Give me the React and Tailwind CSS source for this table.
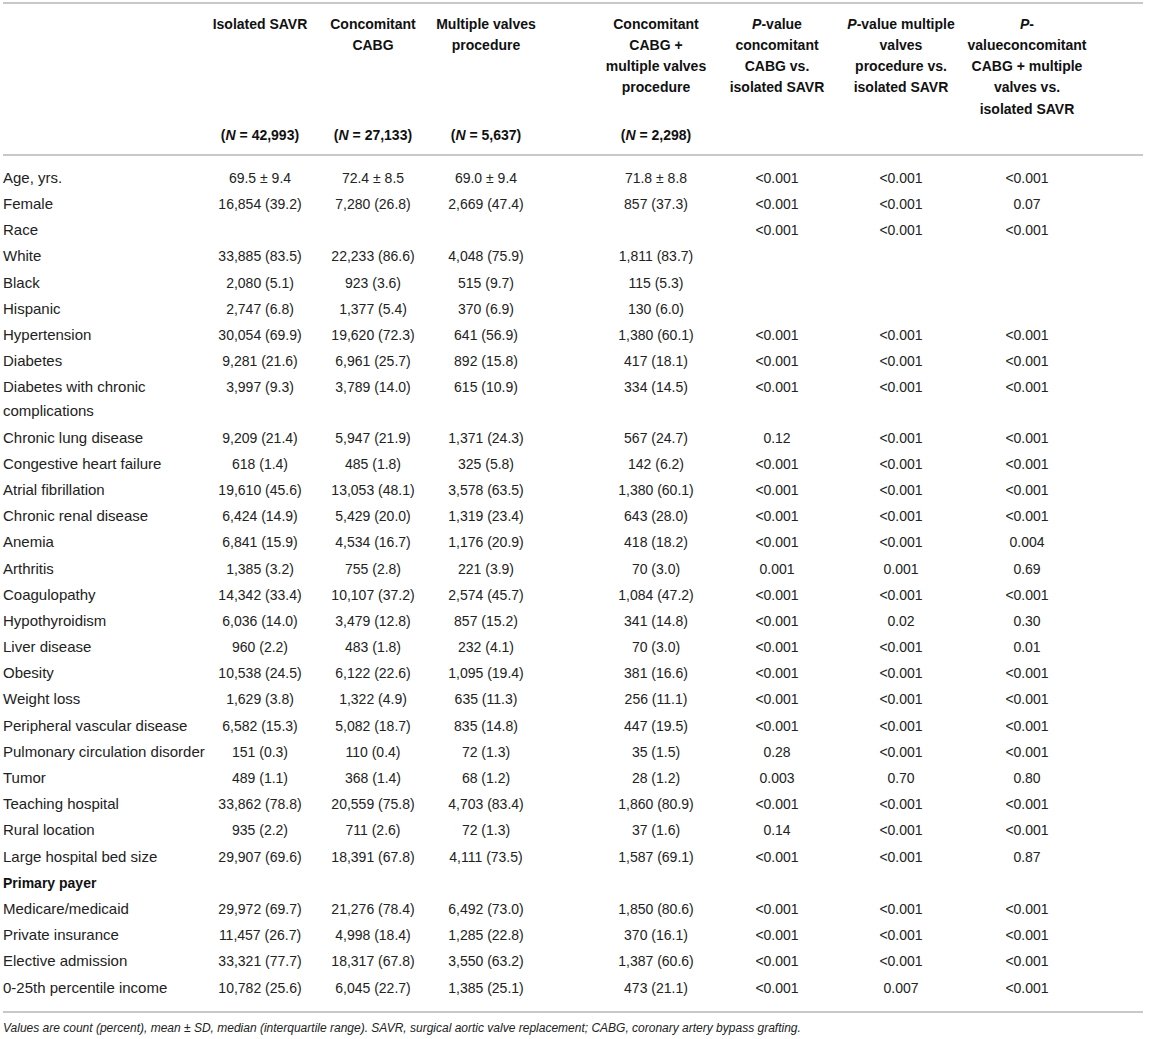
import React from 'react';

const LT = '<0.001';

const rows = [
  ['Age, yrs.', '69.5 ± 9.4', '72.4 ± 8.5', '69.0 ± 9.4', '71.8 ± 8.8', LT, LT, LT],
  ['Female', '16,854 (39.2)', '7,280 (26.8)', '2,669 (47.4)', '857 (37.3)', LT, LT, '0.07'],
  ['Race', '', '', '', '', LT, LT, LT],
  ['White', '33,885 (83.5)', '22,233 (86.6)', '4,048 (75.9)', '1,811 (83.7)', '', '', ''],
  ['Black', '2,080 (5.1)', '923 (3.6)', '515 (9.7)', '115 (5.3)', '', '', ''],
  ['Hispanic', '2,747 (6.8)', '1,377 (5.4)', '370 (6.9)', '130 (6.0)', '', '', ''],
  ['Hypertension', '30,054 (69.9)', '19,620 (72.3)', '641 (56.9)', '1,380 (60.1)', LT, LT, LT],
  ['Diabetes', '9,281 (21.6)', '6,961 (25.7)', '892 (15.8)', '417 (18.1)', LT, LT, LT],
  [['Diabetes with chronic', 'complications'], '3,997 (9.3)', '3,789 (14.0)', '615 (10.9)', '334 (14.5)', LT, LT, LT],
  ['Chronic lung disease', '9,209 (21.4)', '5,947 (21.9)', '1,371 (24.3)', '567 (24.7)', '0.12', LT, LT],
  ['Congestive heart failure', '618 (1.4)', '485 (1.8)', '325 (5.8)', '142 (6.2)', LT, LT, LT],
  ['Atrial fibrillation', '19,610 (45.6)', '13,053 (48.1)', '3,578 (63.5)', '1,380 (60.1)', LT, LT, LT],
  ['Chronic renal disease', '6,424 (14.9)', '5,429 (20.0)', '1,319 (23.4)', '643 (28.0)', LT, LT, LT],
  ['Anemia', '6,841 (15.9)', '4,534 (16.7)', '1,176 (20.9)', '418 (18.2)', LT, LT, '0.004'],
  ['Arthritis', '1,385 (3.2)', '755 (2.8)', '221 (3.9)', '70 (3.0)', '0.001', '0.001', '0.69'],
  ['Coagulopathy', '14,342 (33.4)', '10,107 (37.2)', '2,574 (45.7)', '1,084 (47.2)', LT, LT, LT],
  ['Hypothyroidism', '6,036 (14.0)', '3,479 (12.8)', '857 (15.2)', '341 (14.8)', LT, '0.02', '0.30'],
  ['Liver disease', '960 (2.2)', '483 (1.8)', '232 (4.1)', '70 (3.0)', LT, LT, '0.01'],
  ['Obesity', '10,538 (24.5)', '6,122 (22.6)', '1,095 (19.4)', '381 (16.6)', LT, LT, LT],
  ['Weight loss', '1,629 (3.8)', '1,322 (4.9)', '635 (11.3)', '256 (11.1)', LT, LT, LT],
  ['Peripheral vascular disease', '6,582 (15.3)', '5,082 (18.7)', '835 (14.8)', '447 (19.5)', LT, LT, LT],
  ['Pulmonary circulation disorder', '151 (0.3)', '110 (0.4)', '72 (1.3)', '35 (1.5)', '0.28', LT, LT],
  ['Tumor', '489 (1.1)', '368 (1.4)', '68 (1.2)', '28 (1.2)', '0.003', '0.70', '0.80'],
  ['Teaching hospital', '33,862 (78.8)', '20,559 (75.8)', '4,703 (83.4)', '1,860 (80.9)', LT, LT, LT],
  ['Rural location', '935 (2.2)', '711 (2.6)', '72 (1.3)', '37 (1.6)', '0.14', LT, LT],
  ['Large hospital bed size', '29,907 (69.6)', '18,391 (67.8)', '4,111 (73.5)', '1,587 (69.1)', LT, LT, '0.87'],
  ['Primary payer', '', '', '', '', '', '', '', true],
  ['Medicare/medicaid', '29,972 (69.7)', '21,276 (78.4)', '6,492 (73.0)', '1,850 (80.6)', LT, LT, LT],
  ['Private insurance', '11,457 (26.7)', '4,998 (18.4)', '1,285 (22.8)', '370 (16.1)', LT, LT, LT],
  ['Elective admission', '33,321 (77.7)', '18,317 (67.8)', '3,550 (63.2)', '1,387 (60.6)', LT, LT, LT],
  ['0-25th percentile income', '10,782 (25.6)', '6,045 (22.7)', '1,385 (25.1)', '473 (21.1)', LT, '0.007', LT],
];

// same column template for header and body so everything lines up
const GRID = 'grid grid-cols-[201px_112px_114px_112px_172px_126px_122px_130px]';

const cellClass = (i) => {
  if (i === 0) return 'text-left whitespace-nowrap';
  if (i === 4) return 'text-center whitespace-nowrap pl-[56px]';
  return 'text-center whitespace-nowrap';
};

const P = () => <i>P</i>;

const headers = [
  [],
  ['Isolated SAVR'],
  ['Concomitant', 'CABG'],
  ['Multiple valves', 'procedure'],
  ['Concomitant', 'CABG +', 'multiple valves', 'procedure'],
  [<><P />-value</>, 'concomitant', 'CABG vs.', 'isolated SAVR'],
  [<><P />-value multiple</>, 'valves', 'procedure vs.', 'isolated SAVR'],
  [<><P />-</>, 'valueconcomitant', 'CABG + multiple', 'valves vs.', 'isolated SAVR'],
];

const counts = ['', '42,993', '27,133', '5,637', '2,298', '', '', ''];

const App = () => {
  return (
    <div className="min-h-screen bg-white font-['Liberation_Sans',Arial,sans-serif] text-[14px] text-[#222]">
      <div className="w-[1140px] ml-[3px] pt-[2px]">
        {/* Header */}
        <div className="border-t-2 border-b-2 border-[#c8c8c8] pt-[9.5px] pb-[8px] font-bold text-[#111]">
          <div className={`${GRID} leading-[21.3px] h-[106.5px]`}>
            {headers.map((lines, i) => (
              <div key={i} className={cellClass(i)}>
                {lines.map((l, j) => (
                  <div key={j}>{l}</div>
                ))}
              </div>
            ))}
          </div>
          <div className={`${GRID} leading-[21.3px] mt-[4.5px]`}>
            {counts.map((c, i) => (
              <div key={i} className={cellClass(i)}>
                {c && (
                  <>
                    (<i>N</i> = {c})
                  </>
                )}
              </div>
            ))}
          </div>
        </div>

        {/* Body */}
        <div className="border-b-2 border-[#c8c8c8] pt-[9px] pb-[10px]">
          {rows.map((r, ri) => (
            <div key={ri} className={`${GRID} leading-[24px] py-[1.1px]`}>
              {r.slice(0, 8).map((v, i) => (
                <div
                  key={i}
                  className={`${cellClass(i)} ${i === 0 ? (r[8] ? 'font-bold text-[#111]' : 'text-[15px]') : ''}`}
                >
                  {Array.isArray(v) ? v.map((l, j) => <div key={j}>{l}</div>) : v}
                </div>
              ))}
            </div>
          ))}
        </div>

        {/* Footnote */}
        <p className="pt-[7px] text-[12px] leading-[16px] italic">
          Values are count (percent), mean ± SD, median (interquartile range). SAVR, surgical aortic valve replacement; CABG, coronary artery bypass grafting.
        </p>
      </div>
    </div>
  );
};

export default App;
